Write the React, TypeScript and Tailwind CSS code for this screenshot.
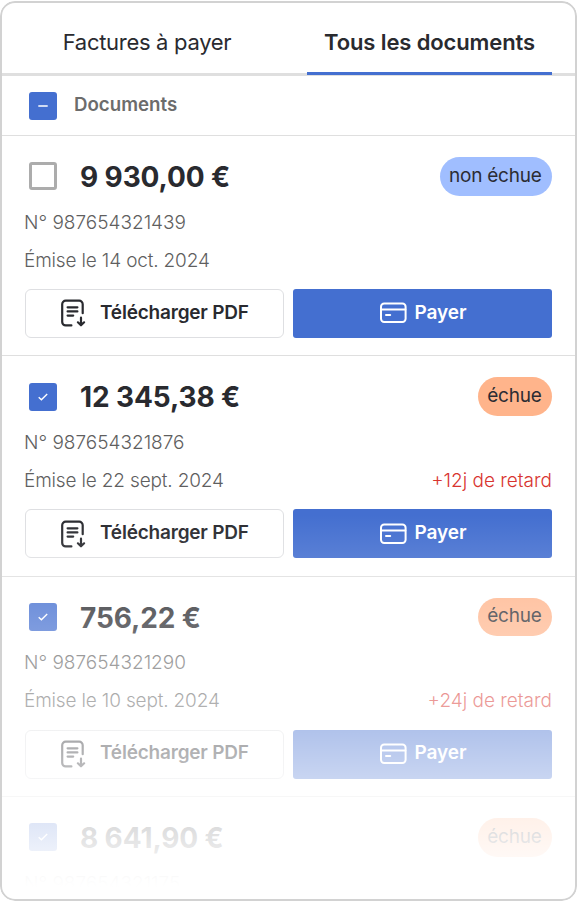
type Invoice = {
  amount: string;
  number: string;
  issued?: string;
  checked: boolean;
  overdue: boolean;
  delay?: string;
};

const invoices: Invoice[] = [
  { amount: "9 930,00 €", number: "987654321439", issued: "14 oct. 2024", checked: false, overdue: false },
  { amount: "12 345,38 €", number: "987654321876", issued: "22 sept. 2024", checked: true, overdue: true, delay: "+12j de retard" },
  { amount: "756,22 €", number: "987654321290", issued: "10 sept. 2024", checked: true, overdue: true, delay: "+24j de retard" },
  // last one is only a teaser under the fade
  { amount: "8 641,90 €", number: "987654321175", checked: true, overdue: true },
];

function Checkbox({ state }: { state: "off" | "on" | "mixed" }) {
  if (state === "off") {
    return <span className="size-7 shrink-0 rounded-[3px] border-3 border-[#acacac] bg-white" />;
  }
  return (
    <span className="flex size-7 shrink-0 items-center justify-center rounded-[3px] bg-[#446fd0]">
      <svg width="28" height="28" viewBox="0 0 28 28" fill="none" stroke="white" strokeWidth="1.4">
        {state === "on" ? <path d="M9.7 14.2 L12.4 16.7 L18.2 10.9" /> : <path d="M9.3 14 H18.7" />}
      </svg>
    </span>
  );
}

function DownloadIcon() {
  return (
    <svg width="26" height="28" viewBox="0 0 26 28" fill="none" stroke="currentColor" strokeWidth="2.2" strokeLinecap="round" strokeLinejoin="round">
      <path d="M11.4 26.4H5.7a3.5 3.5 0 0 1-3.5-3.5V5.200A3.500 3.500 0 0 1 5.700 1.700H19.200A3.500 3.500 0 0 1 22.700 5.200V14.200" />
      <path d="M7.600 8.300H17.400M7.600 12.400H17.400M7.600 16.600H13.200" />
      <path d="M21 18.700V26M17.900 23.300L21 26.300L24.100 23.300" />
    </svg>
  );
}

function CardIcon() {
  return (
    <svg width="28" height="22" viewBox="0 0 28 22" fill="none" stroke="currentColor" strokeWidth="2" strokeLinecap="round">
      <rect x="2" y="1.500" width="24.600" height="18.500" rx="3.200" />
      <path d="M2.200 7.500H26.400M7 12.900H11.200" />
    </svg>
  );
}

function InvoiceRow({ invoice }: { invoice: Invoice }) {
  return (
    <div className="h-[220.4px] shrink-0 border-b border-[#dfdfdf] pt-[21px] pr-[25px] pl-[25px]">
      <div className="flex h-[38.5px] items-center pl-1">
        <Checkbox state={invoice.checked ? "on" : "off"} />
        <span className="ml-[23px] pt-px text-[28px] leading-none font-bold tracking-[-0.12px] text-[#292a2f]">
          {invoice.amount}
        </span>
        <span
          className={`ml-auto flex h-full items-center rounded-full pr-[10.5px] pl-[9.5px] pb-px text-[19px] tracking-[-0.25px] text-[#2b2c33] ${
            invoice.overdue ? "bg-[#ffb48b]" : "bg-[#a0beff]"
          }`}
        >
          {invoice.overdue ? "échue" : "non échue"}
        </span>
      </div>
      <p className="mt-2 -ml-px text-[19px] leading-[38.2px] font-light text-[#5f5f5f]">N° {invoice.number}</p>
      {invoice.issued && (
        <>
          <div className="-ml-px flex justify-between text-[19px] leading-[38.2px] font-light text-[#5f5f5f]">
            <span className="tracking-[-0.16px]">Émise le {invoice.issued}</span>
            {invoice.delay && <span className="text-[#d8342f]">{invoice.delay}</span>}
          </div>
          <div className="mt-[9px] flex h-[49px] gap-[9px] text-[19px] font-semibold">
            <button className="flex w-[259px] items-center rounded-[6px] border border-[#dedfe2] pl-[34px] text-[#292a2f]">
              <DownloadIcon />
              <span className="ml-[14px] pb-px tracking-[-0.2px]">Télécharger PDF</span>
            </button>
            <button className="flex flex-1 items-center justify-center gap-2 rounded-[3px] bg-[#446fd0] text-white">
              <CardIcon />
              <span className="pb-px tracking-[-0.1px]">Payer</span>
            </button>
          </div>
        </>
      )}
    </div>
  );
}

export default function App() {
  return (
    <div className="h-[901px] w-[577px] bg-white pt-px font-['Inter',sans-serif]">
      <div className="relative flex h-[899.5px] flex-col overflow-hidden rounded-[15px] bg-white">
        <nav className="flex h-[75px] shrink-0 border-b-3 border-[#dfdfdf] pr-[25px] pl-5 text-[22px] text-[#292a2f]">
          <button className="flex-1 pt-[11px] tracking-[-0.3px]">Factures à payer</button>
          <button className="ml-[33px] -mb-[2px] w-[245px] border-b-3 border-[#446fd0] pt-3 font-semibold tracking-[-0.12px]">
            Tous les documents
          </button>
        </nav>
        <div className="flex h-[60px] shrink-0 items-center border-b border-[#dfdfdf] pl-[29px]">
          <Checkbox state="mixed" />
          <span className="ml-[17px] pb-px text-[18.7px] font-semibold text-[#6c6c6c]">Documents</span>
        </div>
        {invoices.map((invoice) => (
          <InvoiceRow key={invoice.number} invoice={invoice} />
        ))}
        {/* fades the end of the list out */}
        <div className="absolute inset-x-0 top-[514px] bottom-0 bg-linear-to-b from-white/0 to-white to-[372px]" />
        <div className="absolute inset-0 rounded-[15px] border-2 border-[#d2d2d2]" />
      </div>
    </div>
  );
}
